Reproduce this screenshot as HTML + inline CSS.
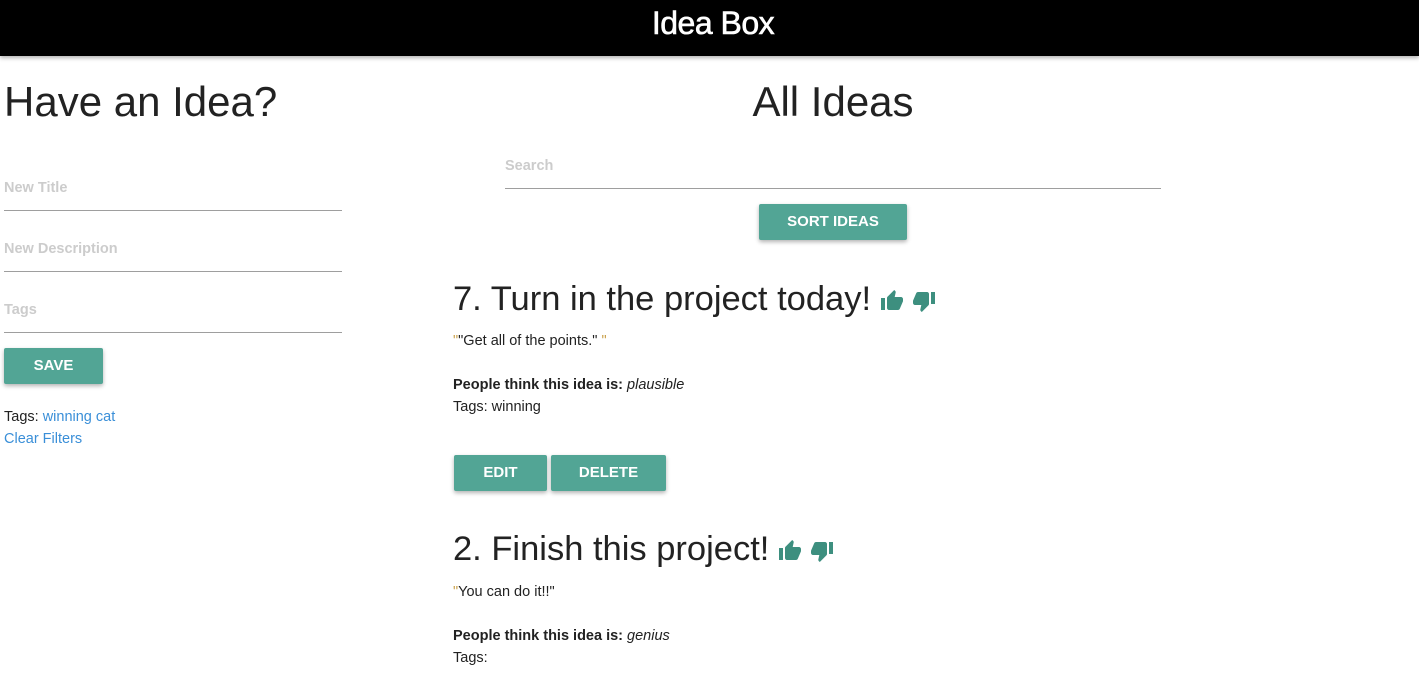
<!DOCTYPE html>
<html><head><style>
*{margin:0;padding:0;box-sizing:border-box}
body{width:1419px;height:680px;overflow:hidden;background:#fff;font-family:"Liberation Sans",sans-serif;color:#222;position:relative}
.a{position:absolute;white-space:nowrap}
.hdr{position:absolute;left:0;top:0;width:1419px;height:56px;background:#000;box-shadow:0 2px 4px rgba(0,0,0,.3)}
.btn{position:absolute;background:#52a595;color:#fff;font-weight:bold;font-size:15px;text-align:center;border-radius:2px;box-shadow:0 2px 4px rgba(0,0,0,.3);line-height:36px;height:36px}
.ph{color:#cccccc;font-size:14.5px;font-weight:bold}
.line{position:absolute;height:1px;background:#9e9e9e}
.t{font-size:14.5px}
.lk{color:#3a8fd8}
.ic{display:inline-block;vertical-align:middle}
</style></head><body>
<div class="hdr"></div>
<div class="a" style="left:0;width:1426px;text-align:center;top:4px;color:#fff;font-size:32px;line-height:38px;letter-spacing:-0.5px;-webkit-text-stroke:0.6px #fff">Idea Box</div>

<div class="a" style="left:4px;top:76px;font-size:42px;line-height:52px;color:#222">Have an Idea?</div>
<div class="a ph" style="left:4px;top:180px">New Title</div>
<div class="line" style="left:4px;top:210px;width:338px"></div>
<div class="a ph" style="left:4px;top:241px">New Description</div>
<div class="line" style="left:4px;top:271px;width:338px"></div>
<div class="a ph" style="left:4px;top:302px">Tags</div>
<div class="line" style="left:4px;top:332px;width:338px"></div>
<div class="btn" style="left:4px;top:348px;width:99px">SAVE</div>
<div class="a t" style="left:4px;top:409px">Tags: <span class="lk">winning cat</span></div>
<div class="a t lk" style="left:4px;top:431px">Clear Filters</div>

<div class="a" style="left:0;width:1666px;text-align:center;top:76px;font-size:42px;line-height:52px">All Ideas</div>
<div class="a ph" style="left:505px;top:158px">Search</div>
<div class="line" style="left:505px;top:188px;width:656px"></div>
<div class="btn" style="left:759px;top:204px;width:148px">SORT IDEAS</div>

<div class="a" style="left:453px;top:277px;font-size:34.5px;line-height:44px">7. Turn in the project today!<svg class="ic" style="margin-left:8px" width="26" height="24" viewBox="0 0 24 24"><path fill="#3d8f7f" d="M1 21h4V9H1v12zm22-11c0-1.1-.9-2-2-2h-6.3l1-4.6v-.3c0-.4-.2-.8-.4-1.1L14.2 1 7.6 7.6C7.2 7.9 7 8.4 7 9v10c0 1.1.9 2 2 2h9c.8 0 1.5-.5 1.8-1.2l3-7.1c.1-.2.2-.5.2-.7v-2z"/></svg><svg class="ic" style="margin-left:6px" width="26" height="24" viewBox="0 0 24 24"><path fill="#3d8f7f" d="M15 3H6c-.8 0-1.5.5-1.8 1.2l-3 7.1c-.1.2-.2.5-.2.7v2c0 1.1.9 2 2 2h6.3l-1 4.6v.3c0 .4.2.8.4 1.1L9.8 23l6.6-6.6c.4-.4.6-.9.6-1.4V5c0-1.1-.9-2-2-2zm4 0v12h4V3h-4z"/></svg></div>
<div class="a t" style="left:453px;top:333px"><span style="color:#c9a04a">"</span>"Get all of the points." <span style="color:#c9a04a">"</span></div>
<div class="a t" style="left:453px;top:377px"><b>People think this idea is:</b> <i>plausible</i></div>
<div class="a t" style="left:453px;top:399px">Tags: winning</div>
<div class="btn" style="left:454px;top:455px;width:93px">EDIT</div>
<div class="btn" style="left:551px;top:455px;width:115px">DELETE</div>

<div class="a" style="left:453px;top:527px;font-size:34.5px;line-height:44px">2. Finish this project!<svg class="ic" style="margin-left:8px" width="26" height="24" viewBox="0 0 24 24"><path fill="#3d8f7f" d="M1 21h4V9H1v12zm22-11c0-1.1-.9-2-2-2h-6.3l1-4.6v-.3c0-.4-.2-.8-.4-1.1L14.2 1 7.6 7.6C7.2 7.9 7 8.4 7 9v10c0 1.1.9 2 2 2h9c.8 0 1.5-.5 1.8-1.2l3-7.1c.1-.2.2-.5.2-.7v-2z"/></svg><svg class="ic" style="margin-left:6px" width="26" height="24" viewBox="0 0 24 24"><path fill="#3d8f7f" d="M15 3H6c-.8 0-1.5.5-1.8 1.2l-3 7.1c-.1.2-.2.5-.2.7v2c0 1.1.9 2 2 2h6.3l-1 4.6v.3c0 .4.2.8.4 1.1L9.8 23l6.6-6.6c.4-.4.6-.9.6-1.4V5c0-1.1-.9-2-2-2zm4 0v12h4V3h-4z"/></svg></div>
<div class="a t" style="left:453px;top:584px"><span style="color:#c9a04a">"</span>You can do it!!"</div>
<div class="a t" style="left:453px;top:628px"><b>People think this idea is:</b> <i>genius</i></div>
<div class="a t" style="left:453px;top:650px">Tags:</div>
</body></html>
